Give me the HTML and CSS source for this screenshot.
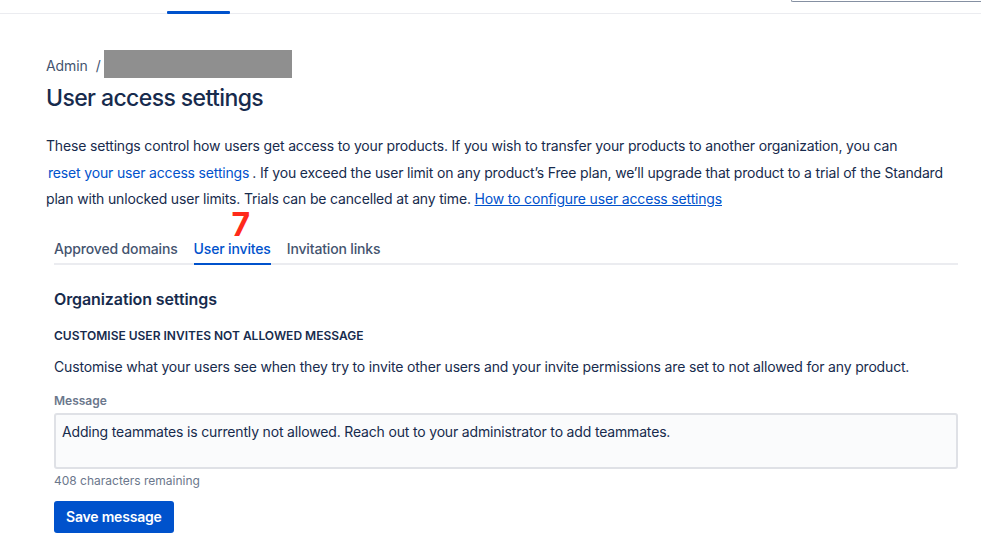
FILE: index.html
```html
<!DOCTYPE html>
<html>
<head>
<meta charset="utf-8">
<link rel="stylesheet" href="styles.css">
</head>
<body>
<div class="topnav">
  <div class="nav-active"></div>
  <div class="nav-search"></div>
</div>
<main class="page">
  <div class="breadcrumbs">
    <span class="crumb">Admin</span>
    <span class="sep">/</span>
    <span class="redacted"></span>
  </div>
  <h1 class="title">User access settings</h1>
  <p class="intro">These settings control how users get access to your products. If you wish to transfer your products to another organization, you can <a class="btn-link" href="#">reset your user access settings</a>. If you exceed the user limit on any product’s Free plan, we’ll upgrade that product to a trial of the Standard plan with unlocked user limits. Trials can be cancelled at any time. <a class="ext-link" href="#">How to configure user access settings</a></p>
  <section class="tabs-area">
    <nav class="tabs">
      <span class="tab">Approved domains</span>
      <span class="tab active">User invites<span class="marker">7</span></span>
      <span class="tab">Invitation links</span>
    </nav>
    <div class="panel">
      <h2 class="section-title">Organization settings</h2>
      <h3 class="caps">CUSTOMISE USER INVITES NOT ALLOWED MESSAGE</h3>
      <p class="desc">Customise what your users see when they try to invite other users and your invite permissions are set to not allowed for any product.</p>
      <label class="field-label">Message</label>
      <div class="textarea">Adding teammates is currently not allowed. Reach out to your administrator to add teammates.</div>
      <div class="helper">408 characters remaining</div>
      <button class="primary">Save message</button>
    </div>
  </section>
</main>
</body>
</html>
```
FILE: styles.css
```css
* { box-sizing: border-box; }
body {
  margin: 0;
  font-family: Inter, "Noto Sans", sans-serif;
  color: #172b4d;
  background: #fff;
}
.topnav {
  height: 14px;
  border-bottom: 1px solid #ebecf0;
  display: flex;
  align-items: flex-end;
}
.nav-active {
  margin-left: 167px;
  width: 63px;
  height: 3px;
  background: #0052cc;
  border-radius: 1px;
  margin-bottom: -1px;
}
.nav-search {
  margin-left: auto;
  align-self: flex-start;
  width: 190px;
  height: 2px;
  border-left: 1px solid #8590a2;
  border-bottom: 1px solid #8590a2;
  border-bottom-left-radius: 2px;
}
.page {
  padding: 36px 23px 0 46px;
}
.breadcrumbs {
  display: flex;
  align-items: center;
  height: 28px;
  font-size: 14px;
  color: #44546f;
  letter-spacing: -0.1px;
}
.crumb, .sep { padding-top: 3px; }
.sep { margin-left: 8px; margin-right: 3px; }
.redacted {
  display: inline-block;
  width: 188px;
  height: 28px;
  background: #8f8f8f;
}
.title {
  margin: 6px 0 0;
  font-size: 23px;
  line-height: 28px;
  font-weight: 500;
  letter-spacing: -0.6px;
  color: #172b4d;
}
.intro {
  margin: 21px 0 0;
  font-size: 14px;
  line-height: 26.5px;
  letter-spacing: -0.17px;
  color: #172b4d;
}
.btn-link {
  display: inline-block;
  color: #0052cc;
  text-decoration: none;
  margin: 0 3px 0 2px;
}
.ext-link {
  color: #0052cc;
  text-decoration: underline;
}
.tabs-area {
  margin-top: 23px;
  padding-left: 8px;
}
.tabs {
  display: flex;
  height: 29px;
  border-bottom: 2px solid #ebecf0;
  font-size: 14px;
  font-weight: 500;
  letter-spacing: -0.15px;
  color: #44546f;
}
.tab {
  position: relative;
  padding-top: 4px;
  margin-right: 16px;
}
.tab.active {
  color: #0052cc;
  border-bottom: 2px solid #0052cc;
  margin-bottom: -2px;
}
.marker {
  position: absolute;
  left: 38px;
  top: -24px;
  font-size: 32px;
  font-weight: 700;
  color: #ff2a1a;
  line-height: 26px;
  letter-spacing: 0;
}
.panel { padding-top: 24px; }
.section-title {
  margin: 0;
  font-size: 16px;
  line-height: 20px;
  font-weight: 600;
  letter-spacing: -0.1px;
}
.caps {
  margin: 19px 0 0;
  font-size: 12px;
  line-height: 16px;
  font-weight: 600;
}
.desc {
  margin: 13px 0 0;
  font-size: 14px;
  line-height: 20px;
  letter-spacing: -0.17px;
}
.field-label {
  display: block;
  margin-top: 16px;
  font-size: 12px;
  line-height: 16px;
  font-weight: 600;
  color: #6b778c;
}
.textarea {
  margin-top: 4px;
  height: 56px;
  background: #fafbfc;
  border: 2px solid #dfe1e6;
  border-radius: 3px;
  padding: 7px 6px;
  font-size: 14px;
  line-height: 20px;
  letter-spacing: -0.17px;
}
.helper {
  margin-top: 4px;
  font-size: 12px;
  line-height: 16px;
  color: #6b778c;
}
.primary {
  margin-top: 12px;
  height: 32px;
  padding: 0 12px;
  background: #0052cc;
  color: #fff;
  border: none;
  border-radius: 3px;
  font-family: inherit;
  font-size: 14px;
  font-weight: 600;
  letter-spacing: -0.2px;
}
```
